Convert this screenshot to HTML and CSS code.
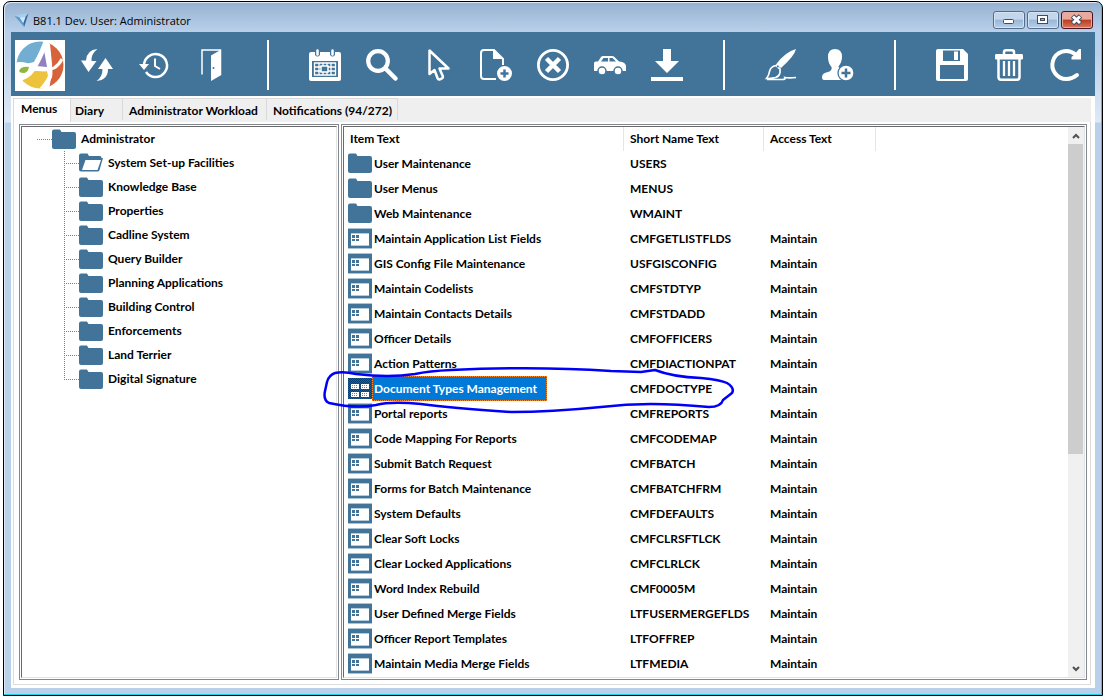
FILE: index.html
```html
<!DOCTYPE html>
<html lang="en">
<head>
<meta charset="utf-8">
<title>B81.1 Dev. User: Administrator</title>
<link rel="stylesheet" href="styles.css">
</head>
<body>
<svg class="defs" aria-hidden="true">
  <symbol id="folder" viewBox="0 0 24 21"><path fill="#42749a" d="M2 0.500h6l1.500 2.500H22q2 0 2 2V18q0 2-2 2H2q-2 0-2-2V2.500Q0 .5 2 .5z"/></symbol>
  <symbol id="folder-open" viewBox="0 0 24 21"><path fill="#42749a" d="M2 .5h6.500L10 3h11q1.500 0 1.500 2H24L20.500 17q-.5 1.500-2 1.500H2q-2 0-2-2V2.500Q0 .5 2 .5z"/><path fill="#fff" d="M6.500 7H22l-3.500 10H3z"/></symbol>
  <symbol id="form" viewBox="0 0 24 21"><path fill="#a9c3d6" d="M0 0h24v21H0z"/><path fill="#42749a" d="M0 1h24v19H0z"/><path fill="#b4cbdc" d="M3 5h18v13H3z"/><path fill="#fff" d="M3 6h18v11H3z"/><path fill="#42749a" d="M4 7h3v3H4zm4 0h3v3H8zM4 11h3v2H4zm4 0h3v2H8z"/></symbol>
  <pattern id="dither" width="2" height="2" patternUnits="userSpaceOnUse"><path fill="#1260a0" d="M0 0h2v2H0z"/><path fill="#063f76" d="M0 0h1v1H0zM1 1h1v1H1z"/></pattern>
  <symbol id="form-selected" viewBox="0 0 24 21"><path fill="url(#dither)" d="M0 0h24v21H0z"/><path fill="#fff" d="M3 6h8v5H3zm10 0h8v5h-8zM3 14h8v5H3zm10 0h8v5h-8z"/><path stroke="#3f8fd2" stroke-dasharray="1 1" d="M4 7.500h6M14 7.500h6M4 9.500h6M14 9.500h6M4 15.500h6M14 15.500h6M4 17.500h6M14 17.500h6"/></symbol>
  <clipPath id="disc"><circle cx="25" cy="25" r="23.500"/></clipPath>
</svg>

<main class="window">
  <header class="titlebar">
    <svg class="app-icon" viewBox="0 0 16 16" aria-hidden="true"><path fill="#a5d0ef" d="M0 3l16-3-3.500 4.500L6 5z"/><path fill="#5b9bd0" d="M0 3l6 2 4 6.500L11 16z"/><path fill="#2a689f" d="M16 0l-5 16-1-4.500 2.500-7z"/><path fill="#d5e8f7" d="M6 5l6.500-.5-2.500 7z"/></svg>
    <h1 class="title">B81.1 Dev. User: Administrator</h1>
    <div class="window-controls">
      <button class="control" type="button" aria-label="Minimize"><svg viewBox="0 0 30 16"><rect x="9.500" y="7.500" width="10" height="4" rx="1" fill="#fff" stroke="#454a5c"/></svg></button>
      <button class="control" type="button" aria-label="Maximize"><svg viewBox="0 0 30 16"><rect x="9.500" y="3.500" width="10" height="8" fill="#fff" stroke="#454a5c"/><rect x="12.500" y="6.500" width="4" height="2" fill="#8fb0d0" stroke="#454a5c"/></svg></button>
      <button class="control close" type="button" aria-label="Close"><svg viewBox="0 0 30 16"><path d="M10.500 4l8 7.500m0-7.500l-8 7.500" fill="none" stroke="#454a5c" stroke-width="5"/><path d="M11 4.500l7 6.500m0-6.500l-7 6.500" fill="none" stroke="#fff" stroke-width="3"/></svg></button>
    </div>
  </header>

  <div class="client">
    <div class="toolbar" role="toolbar" aria-label="Main toolbar">
      <svg class="logo" viewBox="0 0 50 51" role="img" aria-label="Logo">
        <path fill="#fff" d="M0 0h50v51H0z"/>
        <g clip-path="url(#disc)">
          <path fill="#72aed1" d="M0 0h31L19 22q-8 3-19 1z"/>
          <path fill="#8e81bd" d="M29 10l3 17-11-1q5-7 8-16z"/>
          <path fill="#d7633a" d="M34 0h16v50H34l3-18z"/>
          <path fill="#edc33d" d="M15 30q10 2 17 1l1 5-6 15H5l3-12q7-4 7-9z"/>
          <path fill="none" stroke="#fff" stroke-width="5" d="M31 2Q24 20 18 29T1 39"/>
          <path fill="none" stroke="#fff" stroke-width="4" d="M33 4l2 20q1 10 0 13-3 6-10 14"/>
          <path fill="none" stroke="#fff" stroke-width="3" d="M0 24q10-2 16 3 14 5 23 1 5-3 8-9"/>
        </g>
        <path fill="#8cb83f" d="M4 31q2-5 10-4-1 6-6 6-3 0-4-2z"/>
      </svg>
      <div class="tools">
        <button class="tool" type="button" aria-label="Swap"><svg viewBox="0 0 32 32"><path fill="#fff" d="M16.500 0Q5.500 1 5 11.500H0L7.500 23 15.500 12h-5Q10 5 16.500 0zM15.500 32Q27 31 27 20h5L24.500 9 17 20h4.500Q21.500 28 15.500 32z"/></svg></button>
        <button class="tool" type="button" aria-label="History"><svg viewBox="0 0 32 32"><g fill="none" stroke="#fff" stroke-width="2.500"><path d="M6 17A11.500 11.500 0 1 1 8 23"/><path stroke-width="2" d="M17 9.500V17l5 3"/></g><path fill="#fff" d="M1 15h10l-5 6z"/></svg></button>
        <button class="tool" type="button" aria-label="Exit"><svg viewBox="0 0 32 32"><path fill="none" stroke="#fff" stroke-width="1.500" d="M7 25.500V1h18.500v24.500H23"/><path fill="#fff" d="M25.500 1v25.500L16 32V6.500z"/><circle cx="18.500" cy="19" r="1" fill="#42749a"/></svg></button>
        <span class="separator"></span>
        <button class="tool" type="button" aria-label="Calendar"><svg viewBox="0 0 32 32"><path fill="#fff" d="M2 3h4v3q2.500 3 5 0V3h10v3q2.500 3 5 0V3h4q2 0 2 2v25q0 2-2 2H2q-2 0-2-2V5q0-2 2-2z"/><path stroke="#fff" stroke-width="2.500" stroke-linecap="round" d="M8.500 1.500v4m15-4v4"/><path fill="#42749a" d="M3 12h26v16H3z"/><path fill="none" stroke="#fff" stroke-width="1.300" d="M5.500 14h21v12h-21zM5.500 18h21m-21 4h21M10 14v12m4-12v12m4-12v12m4-12v12"/><path fill="#42749a" stroke="#fff" stroke-width="1.500" d="M12 17h7v6h-7z"/></svg></button>
        <button class="tool" type="button" aria-label="Search"><svg viewBox="0 0 32 32"><circle cx="12" cy="12" r="9.800" fill="none" stroke="#fff" stroke-width="4.200"/><path stroke="#fff" stroke-width="4.500" stroke-linecap="round" d="M19.500 19.500l10 10"/></svg></button>
        <button class="tool" type="button" aria-label="Select"><svg viewBox="0 0 32 32"><path fill="none" stroke="#fff" stroke-width="2.500" stroke-linejoin="round" d="M6.500 1.500v23.500l5-4 3 8q.6 1.800 2.500 1.300l2-1q1.300-.5.700-2.300L16.500 19.500h9z"/></svg></button>
        <button class="tool" type="button" aria-label="New document"><svg viewBox="0 0 32 32"><path fill="none" stroke="#fff" stroke-width="2" d="M16 30H4q-3 0-3-3V4q0-3 3-3h10l9 9v6"/><path fill="#fff" d="M13 0l10 10H13z"/><circle cx="24.500" cy="24.500" r="7.500" fill="#fff"/><path stroke="#42749a" stroke-width="2.500" d="M20.500 24.500h8m-4-4v8"/></svg></button>
        <button class="tool" type="button" aria-label="Cancel"><svg viewBox="0 0 32 32"><circle cx="16" cy="16" r="14.600" fill="none" stroke="#fff" stroke-width="2.800"/><path stroke="#fff" stroke-width="4.500" d="M9.500 9.500l13 13m0-13l-13 13"/></svg></button>
        <button class="tool" type="button" aria-label="Vehicle"><svg viewBox="0 0 32 32"><path fill="#fff" d="M0 14q0-1.500 2-1.500h2l3-4.500q.8-1 2-1h9q1.500 0 2.500 1l4.500 4.500q7 .5 7 5V22H0z"/><path fill="#42749a" d="M7 12.500L9.500 9h4.500v3.500zM15.500 9h3l3.500 3.500h-6.500z"/><g fill="#fff" stroke="#42749a" stroke-width="1.500"><circle cx="8" cy="22" r="4"/><circle cx="24" cy="22" r="4"/></g></svg></button>
        <button class="tool" type="button" aria-label="Download"><svg viewBox="0 0 32 32"><path fill="#fff" d="M12 0h8v12h8L16 24 4 12h8zM0 28h32v4H0z"/></svg></button>
        <span class="separator"></span>
        <button class="tool" type="button" aria-label="Brush"><svg viewBox="0 0 32 32"><path fill="#fff" d="M31 0q-1.500 7-15 19l-5-3.500Q20 3 31 0z"/><path fill="none" stroke="#fff" stroke-width="1.700" d="M11 16.500l4 3.500q1 7-4.500 8.500-5 1-9 1 2.500-3 3-7 1-5 6.500-6zM2 30.500h15q4 0 3-2 4 .8 11 0"/><circle cx="12.800" cy="17.500" r="1.100" fill="#42749a"/></svg></button>
        <button class="tool" type="button" aria-label="Add user"><svg viewBox="0 0 32 32"><path fill="#fff" d="M13 0q7 0 7 8 0 5-3.500 9.500Q17 21 23 22v9H2q-2 0-2-3 0-4 6-5 4.500-1.500 3.500-5Q6 14 6 8q0-8 7-8z"/><circle cx="24" cy="24" r="8" fill="#fff" stroke="#42749a" stroke-width="1.300"/><path stroke="#42749a" stroke-width="2.500" d="M19.500 24h9M24 19.500v9"/></svg></button>
        <span class="separator"></span>
        <button class="tool" type="button" aria-label="Save"><svg viewBox="0 0 32 32"><path fill="#fff" d="M2 0h25l5 5v25q0 2-2 2H2q-2 0-2-2V2q0-2 2-2z"/><path fill="#42749a" d="M7 1.500h17V12H7zM4 16h24v14H4z"/><path fill="#fff" d="M18 2.500h4V11h-4z"/></svg></button>
        <button class="tool" type="button" aria-label="Delete"><svg viewBox="0 0 32 32"><path fill="none" stroke="#fff" stroke-width="2.500" d="M11 6V3q0-1.700 2-1.700h6q2 0 2 1.700v3M5.500 10v18q0 2.700 2.500 2.700h16q2.500 0 2.500-2.700V10"/><path fill="#fff" d="M3 5h26q1 0 1 1.500v3q0 1-1 1H3q-1 0-1-1v-3Q2 5 3 5z"/><path stroke="#fff" stroke-width="2.300" d="M11 12v15m5-15v15m5-15v15"/></svg></button>
        <button class="tool" type="button" aria-label="Refresh"><svg viewBox="0 0 32 32"><path fill="none" stroke="#fff" stroke-width="4" stroke-linecap="round" d="M27 26Q22 30 17 30A14 14 0 1 1 25 5"/><path fill="#fff" d="M31 0v10.500H21.500V8L24 6l5-6z"/></svg></button>
      </div>
    </div>

    <div class="tabs" role="tablist">
      <button class="tab selected" type="button" role="tab" aria-selected="true">Menus</button>
      <button class="tab diary" type="button" role="tab" aria-selected="false">Diary</button>
      <button class="tab" type="button" role="tab" aria-selected="false">Administrator Workload</button>
      <button class="tab" type="button" role="tab" aria-selected="false">Notifications (94/272)</button>
    </div>

    <div class="page">
      <section class="pane tree-pane" aria-label="Menus">
        <div class="inset">
          <ul class="tree">
            <li><span class="node root"><svg><use href="#folder"/></svg>Administrator</span>
              <ul class="branch">
                <li class="node"><svg><use href="#folder-open"/></svg>System Set-up Facilities</li>
                <li class="node"><svg><use href="#folder"/></svg>Knowledge Base</li>
                <li class="node"><svg><use href="#folder"/></svg>Properties</li>
                <li class="node"><svg><use href="#folder"/></svg>Cadline System</li>
                <li class="node"><svg><use href="#folder"/></svg>Query Builder</li>
                <li class="node"><svg><use href="#folder"/></svg>Planning Applications</li>
                <li class="node"><svg><use href="#folder"/></svg>Building Control</li>
                <li class="node"><svg><use href="#folder"/></svg>Enforcements</li>
                <li class="node"><svg><use href="#folder"/></svg>Land Terrier</li>
                <li class="node"><svg><use href="#folder"/></svg>Digital Signature</li>
              </ul>
            </li>
          </ul>
        </div>
      </section>

      <section class="pane list-pane" aria-label="Items">
        <div class="inset list">
          <table class="items">
            <colgroup><col class="col-item"><col class="col-name"><col class="col-access"><col></colgroup>
            <thead><tr><th>Item Text</th><th>Short Name Text</th><th>Access Text</th><th></th></tr></thead>
            <tbody>
              <tr><td><span class="item"><svg><use href="#folder"/></svg><span class="label">User Maintenance</span></span></td><td>USERS</td><td></td><td></td></tr>
              <tr><td><span class="item"><svg><use href="#folder"/></svg><span class="label">User Menus</span></span></td><td>MENUS</td><td></td><td></td></tr>
              <tr><td><span class="item"><svg><use href="#folder"/></svg><span class="label">Web Maintenance</span></span></td><td>WMAINT</td><td></td><td></td></tr>
              <tr><td><span class="item"><svg><use href="#form"/></svg><span class="label">Maintain Application List Fields</span></span></td><td>CMFGETLISTFLDS</td><td>Maintain</td><td></td></tr>
              <tr><td><span class="item"><svg><use href="#form"/></svg><span class="label">GIS Config File Maintenance</span></span></td><td>USFGISCONFIG</td><td>Maintain</td><td></td></tr>
              <tr><td><span class="item"><svg><use href="#form"/></svg><span class="label">Maintain Codelists</span></span></td><td>CMFSTDTYP</td><td>Maintain</td><td></td></tr>
              <tr><td><span class="item"><svg><use href="#form"/></svg><span class="label">Maintain Contacts Details</span></span></td><td>CMFSTDADD</td><td>Maintain</td><td></td></tr>
              <tr><td><span class="item"><svg><use href="#form"/></svg><span class="label">Officer Details</span></span></td><td>CMFOFFICERS</td><td>Maintain</td><td></td></tr>
              <tr><td><span class="item"><svg><use href="#form"/></svg><span class="label">Action Patterns</span></span></td><td>CMFDIACTIONPAT</td><td>Maintain</td><td></td></tr>
              <tr class="current"><td><span class="item"><svg><use href="#form-selected"/></svg><span class="label">Document Types Management</span></span></td><td>CMFDOCTYPE</td><td>Maintain</td><td></td></tr>
              <tr><td><span class="item"><svg><use href="#form"/></svg><span class="label">Portal reports</span></span></td><td>CMFREPORTS</td><td>Maintain</td><td></td></tr>
              <tr><td><span class="item"><svg><use href="#form"/></svg><span class="label">Code Mapping For Reports</span></span></td><td>CMFCODEMAP</td><td>Maintain</td><td></td></tr>
              <tr><td><span class="item"><svg><use href="#form"/></svg><span class="label">Submit Batch Request</span></span></td><td>CMFBATCH</td><td>Maintain</td><td></td></tr>
              <tr><td><span class="item"><svg><use href="#form"/></svg><span class="label">Forms for Batch Maintenance</span></span></td><td>CMFBATCHFRM</td><td>Maintain</td><td></td></tr>
              <tr><td><span class="item"><svg><use href="#form"/></svg><span class="label">System Defaults</span></span></td><td>CMFDEFAULTS</td><td>Maintain</td><td></td></tr>
              <tr><td><span class="item"><svg><use href="#form"/></svg><span class="label">Clear Soft Locks</span></span></td><td>CMFCLRSFTLCK</td><td>Maintain</td><td></td></tr>
              <tr><td><span class="item"><svg><use href="#form"/></svg><span class="label">Clear Locked Applications</span></span></td><td>CMFCLRLCK</td><td>Maintain</td><td></td></tr>
              <tr><td><span class="item"><svg><use href="#form"/></svg><span class="label">Word Index Rebuild</span></span></td><td>CMF0005M</td><td>Maintain</td><td></td></tr>
              <tr><td><span class="item"><svg><use href="#form"/></svg><span class="label">User Defined Merge Fields</span></span></td><td>LTFUSERMERGEFLDS</td><td>Maintain</td><td></td></tr>
              <tr><td><span class="item"><svg><use href="#form"/></svg><span class="label">Officer Report Templates</span></span></td><td>LTFOFFREP</td><td>Maintain</td><td></td></tr>
              <tr><td><span class="item"><svg><use href="#form"/></svg><span class="label">Maintain Media Merge Fields</span></span></td><td>LTFMEDIA</td><td>Maintain</td><td></td></tr>
            </tbody>
          </table>
          <div class="scrollbar">
            <button class="scroll-step" type="button" aria-label="Scroll up"><svg viewBox="0 0 8 6"><path fill="none" stroke="#505050" stroke-width="2" d="M1 5l3-3 3 3"/></svg></button>
            <div class="track"><div class="thumb"></div></div>
            <button class="scroll-step" type="button" aria-label="Scroll down"><svg viewBox="0 0 8 6"><path fill="none" stroke="#505050" stroke-width="2" d="M1 1l3 3 3-3"/></svg></button>
          </div>
        </div>
        <svg class="highlight" viewBox="0 0 420 60" aria-hidden="true"><path d="M14 11Q22 9 35 12 68 16 94 12 108 9 130 8Q215 4 290 9L320 10 334 8Q352 15 380 16 400 18 406 21 414 26 411 31L402 38Q400 45 388 45 355 42 330 42 305 42 280 45 230 50 190 50 130 46 100 42 70 39 55 43 35 47 8 41 2 38 4 29L6 20Q8 13 14 11z"/></svg>
      </section>
    </div>
  </div>
</main>
</body>
</html>
```

FILE: styles.css
```css
* { box-sizing: border-box; }

body {
  margin: 0;
  min-height: 100vh;
  display: flex;
  background: #fff;
  color: #000;
  font: 700 12px/16px Lato, "Liberation Sans", sans-serif;
}

button {
  margin: 0;
  padding: 0;
  border: 0;
  background: none;
  color: inherit;
  font: inherit;
}

.defs { position: absolute; width: 0; height: 0; }

.window {
  flex: 1;
  min-width: 0;
  display: flex;
  flex-direction: column;
  margin: 1px 2px 0 3px;
  padding: 0 6px 7px;
  border: 1px solid #000;
  border-radius: 7px 7px 0 0;
  background: linear-gradient(#96b1d0, #b9d0ea 30px, #b9d0ea 50px, #dfe9f6 120px, #b9d0ea 121px);
  box-shadow: inset -1px -1px #1fd0e6, inset 1px 1px #dce8f5;
}

.titlebar {
  display: flex;
  align-items: center;
  height: 30px;
  padding: 6px 3px 0 4px;
}

.app-icon { width: 15px; height: 14px; }

.title {
  margin: 0 auto 0 4px;
  padding-top: 1px;
  font: 400 11px/16px "Open Sans", "Noto Sans", sans-serif;
}

.window-controls { display: flex; gap: 2px; }

.control {
  width: 32px;
  height: 18px;
  border: 1px solid #556d8c;
  border-radius: 3px;
  background: linear-gradient(#c3d6eb 45%, #98b6d6 50%, #b8d0e8);
  box-shadow: inset 0 0 0 1px #d5e4f3;
}

.control svg { display: block; width: 30px; height: 16px; }

.close {
  border-color: #4c1425;
  background: linear-gradient(#e9a99c 45%, #bc3b22 50%, #d47a5c);
  box-shadow: inset 0 0 0 1px #e7aa9f;
}

.client {
  flex: 1;
  display: flex;
  flex-direction: column;
  margin: 0 1px;
  background: #efefef;
  border: solid #fff;
  border-width: 0 4px 3px 2px;
}

.toolbar {
  display: flex;
  align-items: center;
  height: 64px;
  margin: 0 -4px 0 -2px;
  padding: 2px 4px 0;
  background: #42749a;
  overflow: hidden;
}

.logo { flex: none; width: 50px; height: 51px; margin-right: 16px; }
.tools { display: flex; align-items: center; gap: 25px; }
.tool { flex: none; width: 32px; height: 32px; }
.tool svg { display: block; width: 32px; height: 32px; overflow: visible; }

.separator {
  flex: none;
  width: 2px;
  height: 50px;
  margin: 0 15px;
  background: #fff;
}

.tabs {
  display: flex;
  align-items: flex-end;
  height: 26px;
  padding-top: 2px;
  border-top: 2px solid #fff;
}

.tab {
  height: 22px;
  margin-bottom: 2px;
  padding: 2px 8px 0 6px;
  border: 1px solid #d9d9d9;
  border-left: 0;
  border-bottom: 0;
  background: #efefef;
  text-align: left;
  white-space: nowrap;
}

.tab:last-child { padding-right: 5px; }

.selected {
  width: 58px;
  height: 24px;
  margin-bottom: 0;
  padding: 0 0 3px 7px;
  border-left: 1px solid #d9d9d9;
  background: #fff;
}

.diary { width: 52px; padding-left: 4px; }

.page {
  flex: 1;
  display: flex;
  gap: 2px;
  padding: 2px 3px 4px 5px;
  border: 1px solid #dcdcdc;
  border-top: 0;
  background: #fff;
}

.pane {
  display: flex;
  padding: 1px;
  border: 1px solid #828790;
  background: #fff;
}

.tree-pane { flex: 0 0 320px; }
.list-pane { flex: 1; min-width: 0; position: relative; }

.inset {
  flex: 1;
  min-width: 0;
  border: 1px solid #696969;
  border-right-color: #e3e3e3;
  border-bottom-color: #e3e3e3;
}

.tree, .branch { margin: 0; padding: 0; list-style: none; }

.tree { padding-left: 15px; }

.node {
  display: flex;
  align-items: center;
  gap: 5px;
  height: 24px;
  white-space: nowrap;
}

.node svg { flex: none; width: 24px; height: 21px; margin-top: 1px; }

.node::before {
  content: "";
  width: 15px;
  margin-right: -5px;
  border-top: 1px dotted #808080;
}

.branch {
  margin-left: 27px;
  background: repeating-linear-gradient(#808080 0 1px, transparent 1px 2px) no-repeat 0 0 / 1px calc(100% - 12px);
}

.list { display: flex; align-items: flex-start; }

.items {
  flex: 1;
  min-width: 0;
  table-layout: fixed;
  border-collapse: separate;
  border-spacing: 0;
  text-align: left;
}

.col-item { width: 280px; }
.col-name { width: 140px; }
.col-access { width: 112px; }

.items th, .items td {
  height: 25px;
  padding: 0 0 0 6px;
  font-weight: 700;
  white-space: nowrap;
}

.items th { height: 24px; border-right: 1px solid #e5e5e5; }
.items th:last-child { border-right: 0; }
.items td:first-child { padding-left: 4px; }

.item { display: flex; align-items: center; }
.item svg { flex: none; width: 24px; height: 21px; }
.label { height: 25px; padding: 4px 9px 4px 1px; border: 1px dotted transparent; line-height: 15px; }
.current .label { background: #0078d7; border-color: #ff8728; color: #fff; }

.scrollbar {
  align-self: stretch;
  flex: none;
  display: flex;
  flex-direction: column;
  width: 16px;
  padding-right: 1px;
  background: #f0f0f0;
}

.scroll-step { display: flex; align-items: center; justify-content: center; height: 17px; }
.scroll-step svg { width: 8px; height: 6px; }
.track { flex: 1; }
.thumb { height: 60%; background: #cdcdcd; }

.highlight {
  position: absolute;
  top: 237px;
  left: -21px;
  width: 420px;
  height: 60px;
  fill: none;
  stroke: #0000fa;
  stroke-width: 2.5;
  stroke-linejoin: round;
  pointer-events: none;
}
```
